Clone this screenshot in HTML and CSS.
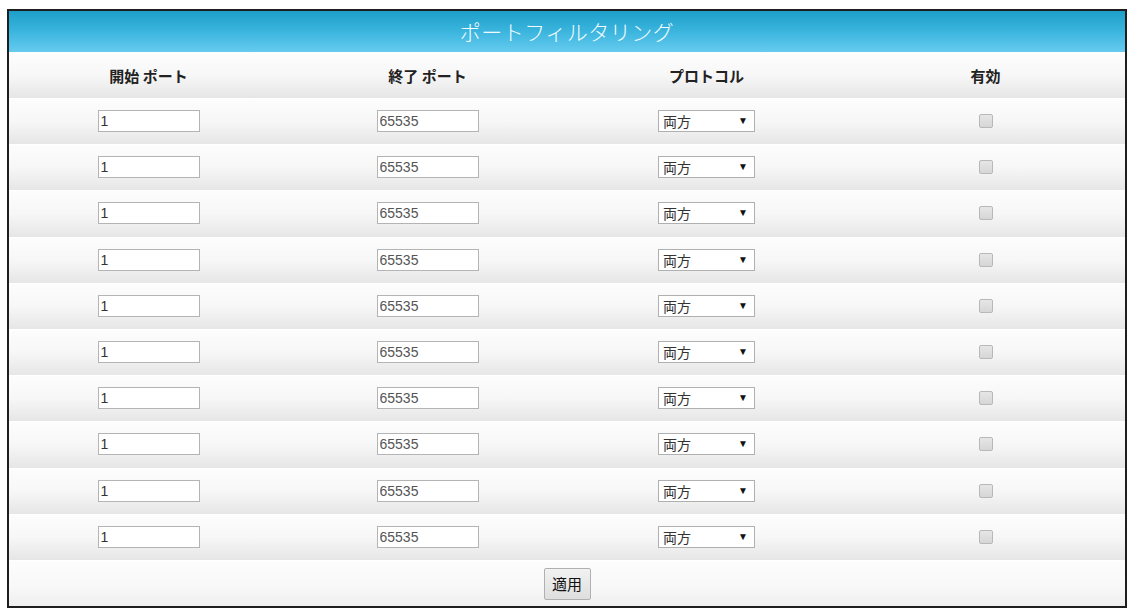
FILE: index.html
```html
<!DOCTYPE html>
<html lang="ja">
<head>
<meta charset="utf-8">
<title>ポートフィルタリング</title>
<link rel="stylesheet" href="styles.css">
</head>
<body>
<div class="panel">
  <div class="title">ポートフィルタリング</div>
  <div class="grid">
    <div class="row head">
      <div class="cell">開始 ポート</div>
      <div class="cell">終了 ポート</div>
      <div class="cell">プロトコル</div>
      <div class="cell">有効</div>
    </div>
    <div class="row"><div class="cell"><input class="txt first" value="1"></div><div class="cell"><input class="txt" value="65535"></div><div class="cell"><div class="sel"><select><option>両方</option><option>TCP</option><option>UDP</option></select><span class="arr">▼</span></div></div><div class="cell"><span class="chk"></span></div></div>
    <div class="row"><div class="cell"><input class="txt first" value="1"></div><div class="cell"><input class="txt" value="65535"></div><div class="cell"><div class="sel"><select><option>両方</option><option>TCP</option><option>UDP</option></select><span class="arr">▼</span></div></div><div class="cell"><span class="chk"></span></div></div>
    <div class="row"><div class="cell"><input class="txt first" value="1"></div><div class="cell"><input class="txt" value="65535"></div><div class="cell"><div class="sel"><select><option>両方</option><option>TCP</option><option>UDP</option></select><span class="arr">▼</span></div></div><div class="cell"><span class="chk"></span></div></div>
    <div class="row"><div class="cell"><input class="txt first" value="1"></div><div class="cell"><input class="txt" value="65535"></div><div class="cell"><div class="sel"><select><option>両方</option><option>TCP</option><option>UDP</option></select><span class="arr">▼</span></div></div><div class="cell"><span class="chk"></span></div></div>
    <div class="row"><div class="cell"><input class="txt first" value="1"></div><div class="cell"><input class="txt" value="65535"></div><div class="cell"><div class="sel"><select><option>両方</option><option>TCP</option><option>UDP</option></select><span class="arr">▼</span></div></div><div class="cell"><span class="chk"></span></div></div>
    <div class="row"><div class="cell"><input class="txt first" value="1"></div><div class="cell"><input class="txt" value="65535"></div><div class="cell"><div class="sel"><select><option>両方</option><option>TCP</option><option>UDP</option></select><span class="arr">▼</span></div></div><div class="cell"><span class="chk"></span></div></div>
    <div class="row"><div class="cell"><input class="txt first" value="1"></div><div class="cell"><input class="txt" value="65535"></div><div class="cell"><div class="sel"><select><option>両方</option><option>TCP</option><option>UDP</option></select><span class="arr">▼</span></div></div><div class="cell"><span class="chk"></span></div></div>
    <div class="row"><div class="cell"><input class="txt first" value="1"></div><div class="cell"><input class="txt" value="65535"></div><div class="cell"><div class="sel"><select><option>両方</option><option>TCP</option><option>UDP</option></select><span class="arr">▼</span></div></div><div class="cell"><span class="chk"></span></div></div>
    <div class="row"><div class="cell"><input class="txt first" value="1"></div><div class="cell"><input class="txt" value="65535"></div><div class="cell"><div class="sel"><select><option>両方</option><option>TCP</option><option>UDP</option></select><span class="arr">▼</span></div></div><div class="cell"><span class="chk"></span></div></div>
    <div class="row"><div class="cell"><input class="txt first" value="1"></div><div class="cell"><input class="txt" value="65535"></div><div class="cell"><div class="sel"><select><option>両方</option><option>TCP</option><option>UDP</option></select><span class="arr">▼</span></div></div><div class="cell"><span class="chk"></span></div></div>
  </div>
  <div class="foot"><button class="btn">適用</button></div>
</div>
</body>
</html>
```
FILE: styles.css
```css
html, body {
  margin: 0;
  padding: 0;
  background: #ffffff;
}
body {
  padding: 9px 4px 0 7px;
  font-family: "Liberation Sans", "Noto Sans CJK JP", sans-serif;
}
.panel {
  width: 1116px;
  height: 595px;
  border: 2px solid #1e1e1e;
  display: flex;
  flex-direction: column;
  background: #f4f4f4;
}
.title {
  height: 41px;
  background: linear-gradient(to bottom, #1d9fc9 0%, #3bb5de 50%, #66cbef 100%);
  color: #f4fbff;
  font-family: "Noto Sans CJK JP", sans-serif;
  font-weight: 300;
  font-size: 21px;
  letter-spacing: 0.5px;
  line-height: 41px;
  text-align: center;
}
.grid {
  display: flex;
  flex-direction: column;
}
.row {
  display: grid;
  grid-template-columns: repeat(4, 1fr);
  height: 46.2px;
  align-items: center;
  background: linear-gradient(to bottom, #fdfdfd 0%, #f7f7f7 50%, #e6e6e6 100%);
  box-shadow: inset 0 1px 0 #ffffff;
}
.row.head {
  height: 46px;
  font-family: "Noto Sans CJK JP", sans-serif;
  font-weight: 700;
  font-size: 15px;
  color: #222;
}
.cell {
  display: flex;
  justify-content: center;
  align-items: center;
}
.txt {
  box-sizing: border-box;
  width: 102px;
  height: 22px;
  margin: 0;
  padding: 0 2px;
  border: 1px solid #b4b4b4;
  background: #ffffff;
  font-family: "Liberation Sans", sans-serif;
  font-size: 14px;
  color: #555;
  outline: none;
}
.txt.first {
  color: #333;
}
.sel {
  position: relative;
  width: 97px;
  height: 22px;
}
.sel select {
  appearance: none;
  -webkit-appearance: none;
  box-sizing: border-box;
  width: 97px;
  height: 22px;
  margin: 0;
  padding: 0 0 0 4px;
  border: 1px solid #b0b0b0;
  border-radius: 0;
  background: #ffffff;
  font-family: "Noto Sans CJK JP", sans-serif;
  font-size: 14px;
  color: #333;
}
.arr {
  position: absolute;
  right: 7px;
  top: 5px;
  font-size: 10px;
  line-height: 12px;
  color: #111;
  pointer-events: none;
}
.chk {
  box-sizing: border-box;
  width: 14px;
  height: 14px;
  border: 1px solid #b8b8b8;
  border-radius: 2px;
  background: linear-gradient(to bottom, #e6e6e6, #d6d6d6);
}
.foot {
  flex: 1;
  display: flex;
  justify-content: center;
  align-items: center;
  background: linear-gradient(to bottom, #fdfdfd 0%, #f8f8f8 60%, #eeeeee 100%);
  box-shadow: inset 0 1px 0 #ffffff;
}
.btn {
  box-sizing: border-box;
  width: 47px;
  height: 32px;
  margin-top: 2px;
  padding: 0;
  border: 1px solid #b0b0b0;
  border-radius: 2px;
  background: linear-gradient(to bottom, #f2f2f2, #dedede);
  font-family: "Noto Sans CJK JP", sans-serif;
  font-size: 15px;
  color: #111;
}
```
